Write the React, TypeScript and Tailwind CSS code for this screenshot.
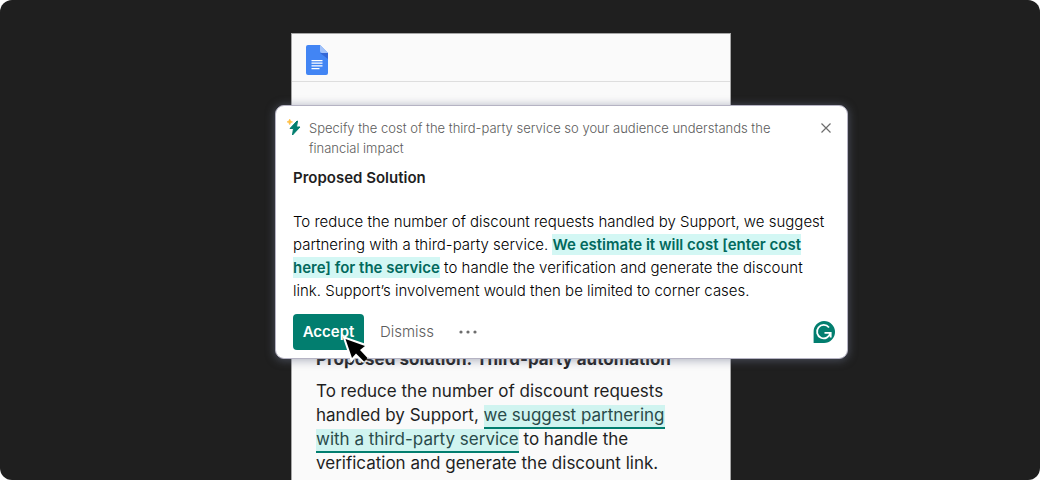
import { useState } from 'react'

function DocsIcon() {
  return (
    <svg viewBox="0 0 22 30" className="h-[30px] w-[22px]" aria-hidden="true">
      <path d="M2 0h12l8 8v20a2 2 0 0 1-2 2H2a2 2 0 0 1-2-2V2a2 2 0 0 1 2-2z" fill="#4285f4" />
      <path d="M14 8h8v6z" fill="#3367d6" />
      <path d="M14 0l8 8h-6a2 2 0 0 1-2-2z" fill="#a1c2fa" />
      <path d="M5.500 15.600h11M5.500 18.200h11M5.500 20.900h11M5.500 23.700h8" stroke="#fff" strokeWidth="1.300" />
    </svg>
  )
}

function BoltIcon() {
  return (
    <svg viewBox="0 0 16 18" className="h-[18px] w-4 shrink-0" aria-hidden="true">
      <path d="M10 3L3 10.500h3.500L5.500 17 13 9H9.500L10.500 3z" fill="#027e6f" stroke="#027e6f" strokeLinejoin="round" />
      <path d="M2.700 1l.9 2 2 .9-2 .9-.9 2-.9-2-2-.9 2-.9z" fill="#ffbf45" stroke="#ffbf45" strokeWidth=".5" />
    </svg>
  )
}

function GrammarlyIcon() {
  return (
    <svg viewBox="0 0 22 22" className="h-[22px] w-[22px]" aria-hidden="true">
      <path d="M11 0a11 11 0 1 1 0 22H.600V11A10.700 10.700 0 0 1 11 0z" fill="#027e6f" />
      <path d="M16 6.500A6.700 6.700 0 1 0 17.300 12" fill="none" stroke="#fff" strokeWidth="1.800" />
      <path d="M11.500 11.800h6.200v4.700" fill="none" stroke="#fff" strokeWidth="1.800" />
    </svg>
  )
}

function Cursor() {
  return (
    <svg viewBox="0 0 28 32" className="pointer-events-none absolute left-[65px] top-[227px] h-8 w-7" aria-hidden="true">
      <path d="M23.500 28.500L15 20.500l-4 5L4.500 6 24.500 13l-5 4 8 7.500" fill="#000" stroke="#fff" strokeWidth="4" />
      <path d="M4.500 6l6.500 19 4-4.500 8 8 3.500-3.500-7.500-8 5-4z" fill="#000" />
    </svg>
  )
}

function SuggestionCard({ onClose }: { onClose: () => void }) {
  return (
    <section className="absolute -left-[17px] top-[71px] w-[573px] rounded-[9px] border border-[#b5b3c3] bg-white pb-2 pl-[17px] pr-3 pt-3 shadow-[0_1px_8px_1px_rgba(109,117,141,0.5)]">
      <div className="-ml-1.5 flex items-start">
        <BoltIcon />
        <p className="ml-1.5 w-[480px] text-[13px] font-light leading-5 text-[#5c5c5c]">
          Specify the cost of the third-party service so your audience understands the financial impact
        </p>
        <button type="button" aria-label="Close" onClick={onClose} className="ml-auto mt-px p-1">
          <svg viewBox="0 0 10 10" className="size-2.5" aria-hidden="true">
            <path d="M.5.5l9 9M9.500.5l-9 9" stroke="#6d6d6d" strokeWidth="1.200" />
          </svg>
        </button>
      </div>

      <h2 className="mt-2 text-[15px] font-semibold leading-6">Proposed Solution</h2>
      <p className="mt-5 text-[15px] font-light leading-[23px] text-black">
        To reduce the number of discount requests handled by Support, we suggest
        <br />
        partnering with a third-party service.{' '}
        <mark className="bg-[#d3f7f4] py-px font-semibold text-[#02695d]">
          We estimate it will cost [enter cost
          <br />
          here] for the service
        </mark>{' '}
        to handle the verification and generate the discount
        <br />
        link. Support’s involvement would then be limited to corner cases.
      </p>

      {/* Actions */}
      <div className="mt-3 flex items-center">
        <button type="button" className="h-9 w-[71px] rounded bg-[#027e6f] text-[15px] font-semibold text-white">
          Accept
        </button>
        <button type="button" className="ml-4 text-[15px] font-light text-[#5c5c5c]">
          Dismiss
        </button>
        <button type="button" aria-label="More options" className="ml-[25px] py-2">
          <svg viewBox="0 0 18 4" className="h-1 w-[18px]" fill="#6d6d6d" aria-hidden="true">
            <circle cx="2" cy="2" r="1.600" />
            <circle cx="9" cy="2" r="1.600" />
            <circle cx="16" cy="2" r="1.600" />
          </svg>
        </button>
        <span className="ml-auto">
          <GrammarlyIcon />
        </span>
      </div>
      <Cursor />
    </section>
  )
}

export default function App() {
  const [isOpen, setIsOpen] = useState(true)

  return (
    <main className="flex h-screen justify-center overflow-hidden rounded-xl bg-[#1f1f1f] pr-[18px] pt-[33px] font-['Inter',sans-serif] text-[#1f1f1f]">
      <article className="relative w-[440px] border border-b-0 border-[#a6a6a6] bg-[#fafafa]">
        <header className="flex h-12 items-center border-b border-[#dedede] px-3.5 pt-1">
          <DocsIcon />
        </header>

        <div className="px-6 pt-[265px]">
          <h1 className="text-[17px] font-bold leading-6">Proposed solution: Third-party automation</h1>
          <p className="mt-2 text-[17px] leading-6">
            To reduce the number of discount requests
            <br />
            handled by Support,{' '}
            <mark className="border-b-2 border-[#027e6f] bg-[#d0f4f0] pb-0.5 text-[#2a4b4a]">
              we suggest partnering
              <br />
              with a third-party service
            </mark>{' '}
            to handle the
            <br />
            verification and generate the discount link.
          </p>
        </div>

        {isOpen && <SuggestionCard onClose={() => setIsOpen(false)} />}
      </article>
    </main>
  )
}
